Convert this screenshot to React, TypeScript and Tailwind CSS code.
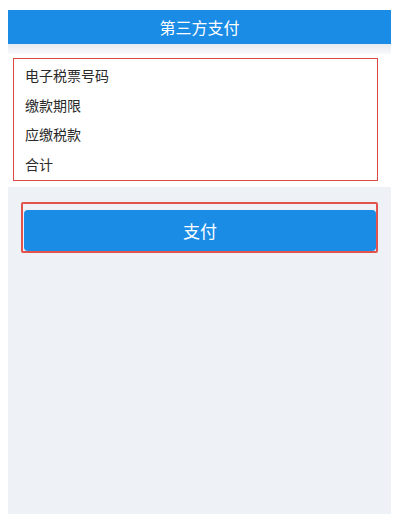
const FONT = { fontFamily: '"Noto Sans CJK SC", "Noto Sans", sans-serif' };

const ROWS = ['电子税票号码', '缴款期限', '应缴税款', '合计'];

export default function App() {
  return (
    <div className="h-[524px] w-full bg-white pt-[10px] pl-[8px] pr-[9px] pb-[10px]" style={FONT}>
      <div className="flex h-full flex-col">
        {/* 标题栏 */}
        <div className="flex h-[34px] items-center justify-center bg-[#1a8ce6] text-[16px] text-white">
          第三方支付
        </div>
        <div className="h-[10px] bg-gradient-to-b from-[#e6eaee] to-[#f8f9fb]" />

        {/* 信息列表 */}
        <div className="bg-white pl-[5px] pr-[13px] pt-[4px] pb-[6px]">
          <div className="border-[1.5px] border-solid border-[#dc4a45] px-[11px] pt-[2px] pb-[1px]">
            {ROWS.map(r => (
              <div key={r} className="flex h-[29.5px] items-center text-[14px] text-[#2a2a2a]">
                {r}
              </div>
            ))}
          </div>
        </div>

        {/* 支付按钮 */}
        <div className="flex-1 bg-[#eef2f6] pl-[13px] pr-[13px] pt-[15px]">
          <div className="rounded-[2px] border-2 border-solid border-[#e2534e] pt-[6px] pl-[1px] pr-0 pb-0">
            <div className="flex h-[41px] w-full items-center justify-center rounded-[4px] bg-[#1a8ce6] text-[17px] text-white">
              支付
            </div>
          </div>
        </div>
      </div>
    </div>
  );
}
